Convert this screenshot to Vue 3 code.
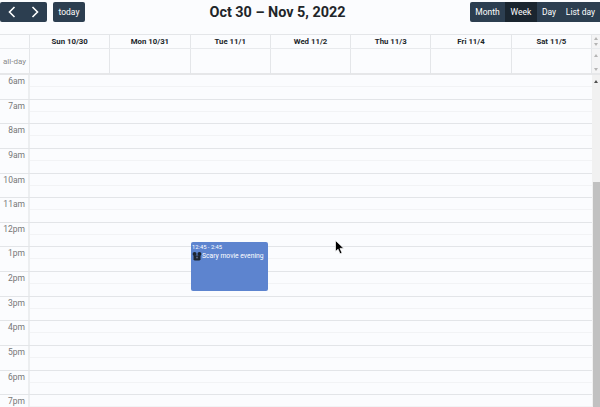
<template>
  <div class="calendar">
    <div class="toolbar">
      <div class="toolbar-left">
        <div class="btn-group">
          <button class="btn nav-btn">
            <svg width="8" height="12" viewBox="0 0 8 12"><path d="M6.5 1 1.5 6l5 5" fill="none" stroke="#fff" stroke-width="1.6" /></svg>
          </button>
          <button class="btn nav-btn">
            <svg width="8" height="12" viewBox="0 0 8 12"><path d="M1.5 1l5 5-5 5" fill="none" stroke="#fff" stroke-width="1.6" /></svg>
          </button>
        </div>
        <button class="btn today-btn">today</button>
      </div>
      <h2 class="title">Oct 30 – Nov 5, 2022</h2>
      <div class="btn-group">
        <button
          v-for="view in views"
          :key="view"
          :class="['btn', 'view-btn', { 'view-btn--active': view === 'Week' }]"
        >
          {{ view }}
        </button>
      </div>
    </div>

    <div class="head">
      <div class="head-main">
        <div class="head-row">
          <div class="axis"></div>
          <div v-for="day in days" :key="day" class="day-title">{{ day }}</div>
        </div>
        <div class="allday-row">
          <div class="axis allday-label">all-day</div>
          <div v-for="day in days" :key="day" class="allday-cell"></div>
        </div>
      </div>
      <div class="head-scroll">
        <div class="mini-bar mini-bar--top">
          <span class="arrow-up"></span>
          <span class="arrow-down"></span>
        </div>
        <div class="mini-bar mini-bar--bottom">
          <span class="arrow-up"></span>
          <span class="arrow-down"></span>
        </div>
      </div>
    </div>
    <div class="divider"></div>

    <div class="body">
      <div class="grid">
        <div v-for="hour in hours" :key="hour" class="hour">
          <div class="axis hour-label">{{ hour }}</div>
          <div class="hour-slots">
            <div class="half"></div>
          </div>
        </div>
        <div class="event">
          <div class="event-time">12:45 - 2:45</div>
          <div class="event-title">
            <svg class="event-icon" width="10" height="9" viewBox="0 0 10 9">
              <circle cx="2.6" cy="2" r="2" fill="#1c2430" />
              <circle cx="7.4" cy="2" r="2" fill="#1c2430" />
              <path d="M1.5 3.5h7v4l-1 1h-5l-1-1z" fill="#1c2430" />
              <circle cx="5" cy="5.5" r="1.1" fill="#59627a" />
            </svg>
            <span>Scary movie evening</span>
          </div>
        </div>
      </div>
      <div class="scrollbar">
        <span class="arrow-up arrow-up--dark"></span>
        <div class="thumb"></div>
      </div>
    </div>

    <svg class="cursor" width="10" height="15" viewBox="0 0 10 15">
      <path d="M.5.5v11l2.6-2.3 1.9 4.6 2-.9L5 8.4l3.6-.2z" fill="#000" stroke="#fff" stroke-width=".7" />
    </svg>
  </div>
</template>

<script setup>
const views = ['Month', 'Week', 'Day', 'List day']
const days = ['Sun 10/30', 'Mon 10/31', 'Tue 11/1', 'Wed 11/2', 'Thu 11/3', 'Fri 11/4', 'Sat 11/5']
const hours = ['6am', '7am', '8am', '9am', '10am', '11am', '12pm', '1pm', '2pm', '3pm', '4pm', '5pm', '6pm', '7pm']
</script>

<style scoped>
.calendar {
  position: relative;
  width: 600px;
  height: 407px;
  overflow: hidden;
  background: #fbfcfe;
  font-family: Roboto, "Liberation Sans", sans-serif;
  color: #212529;
}

.toolbar {
  display: flex;
  align-items: flex-start;
  justify-content: space-between;
  height: 34px;
  box-sizing: border-box;
  padding-top: 2px;
}

.toolbar-left {
  display: flex;
  gap: 6px;
}

.btn-group {
  display: flex;
}

.btn {
  border: 0;
  background: #2c3e50;
  color: #fff;
  font-family: inherit;
  font-size: 8.5px;
  height: 20px;
  padding: 0;
  border-radius: 2px;
  white-space: nowrap;
}

.nav-btn {
  width: 23.5px;
  display: flex;
  align-items: center;
  justify-content: center;
}

.nav-btn:first-child {
  border-radius: 2px 0 0 2px;
}

.nav-btn:last-child {
  border-radius: 0 2px 2px 0;
}

.today-btn {
  width: 32px;
}

.title {
  margin: 0;
  font-size: 14.4px;
  font-weight: 700;
  line-height: 21px;
  color: #212529;
}

.view-btn {
  border-radius: 0;
}

.view-btn:nth-child(1) {
  width: 35px;
  border-radius: 2px 0 0 2px;
}

.view-btn:nth-child(2) {
  width: 32px;
}

.view-btn:nth-child(3) {
  width: 24px;
}

.view-btn:nth-child(4) {
  width: 39px;
}

.view-btn--active {
  background: #1a252f;
}

.head {
  display: flex;
  height: 39px;
  border-top: 1px solid #e4e6e9;
  box-sizing: border-box;
}

.head-main {
  flex: 1;
  min-width: 0;
}

.head-row {
  display: flex;
  height: 13px;
  border-bottom: 1px solid #e8eaed;
}

.axis {
  flex: none;
  width: 30px;
  box-sizing: border-box;
  border-right: 1px solid #e4e6e9;
}

.day-title {
  flex: 1;
  min-width: 0;
  border-right: 1px solid #e4e6e9;
  font-size: 7.8px;
  font-weight: 700;
  line-height: 13px;
  text-align: center;
  white-space: nowrap;
}

.allday-row {
  display: flex;
  height: 25px;
}

.allday-label {
  font-size: 8px;
  line-height: 25px;
  text-align: right;
  padding-right: 3px;
  color: #8a8a8a;
  white-space: nowrap;
}

.allday-cell {
  flex: 1;
  min-width: 0;
  border-right: 1px solid #e4e6e9;
}

.head-scroll {
  flex: none;
  width: 8px;
  background: #f4f4f5;
}

.mini-bar {
  position: relative;
  border-bottom: 1px solid #e8eaed;
}

.mini-bar--top {
  height: 13px;
}

.mini-bar--bottom {
  height: 25px;
  border-bottom: 0;
}

.head-scroll .arrow-up,
.head-scroll .arrow-down {
  position: absolute;
  left: 1.5px;
}

.mini-bar--top .arrow-up {
  top: 2px;
}

.mini-bar--top .arrow-down {
  top: 8px;
}

.mini-bar--bottom .arrow-up {
  top: 5px;
}

.mini-bar--bottom .arrow-down {
  top: 19px;
}

.arrow-up,
.arrow-down {
  display: block;
  width: 0;
  height: 0;
  border-left: 2.5px solid transparent;
  border-right: 2.5px solid transparent;
}

.arrow-up {
  border-bottom: 3px solid #b4b4b4;
}

.arrow-down {
  border-top: 3px solid #b4b4b4;
}

.arrow-up--dark {
  position: absolute;
  left: 1.5px;
  top: 5px;
  border-bottom-color: #505050;
}

.divider {
  height: 2px;
  background: #e6e7e9;
}

.body {
  display: flex;
  height: 332px;
  overflow: hidden;
}

.grid {
  position: relative;
  flex: 1;
  min-width: 0;
}

.hour {
  display: flex;
  height: 24.65px;
  box-sizing: border-box;
  border-bottom: 1px solid #e3e5e8;
}

.hour-label {
  border-right: 2px solid #eceef0;
  font-size: 8.5px;
  line-height: 10px;
  padding: 1px 3px 0 0;
  text-align: right;
  color: #777;
}

.hour-slots {
  flex: 1;
  min-width: 0;
}

.half {
  height: 12px;
  box-sizing: border-box;
  border-bottom: 1px solid #f2f3f5;
}

.event {
  position: absolute;
  left: 191px;
  top: 166.5px;
  width: 77px;
  height: 49px;
  box-sizing: border-box;
  padding: 1px;
  background: #5d84cf;
  border-radius: 2px;
  color: #fff;
  overflow: hidden;
}

.event-time {
  font-size: 5.8px;
  line-height: 8px;
  white-space: nowrap;
}

.event-title {
  display: flex;
  align-items: center;
  font-size: 6.75px;
  line-height: 11px;
  white-space: nowrap;
}

.event-icon {
  flex: none;
}

.scrollbar {
  position: relative;
  flex: none;
  width: 8px;
  background: #f1f1f1;
}

.thumb {
  position: absolute;
  left: 0.5px;
  right: 0;
  top: 107px;
  bottom: 0;
  background: #c1c1c1;
}

.cursor {
  position: absolute;
  left: 335px;
  top: 240px;
}
</style>
<style>
html,
body {
  margin: 0;
  background: #fbfcfe;
}
</style>
